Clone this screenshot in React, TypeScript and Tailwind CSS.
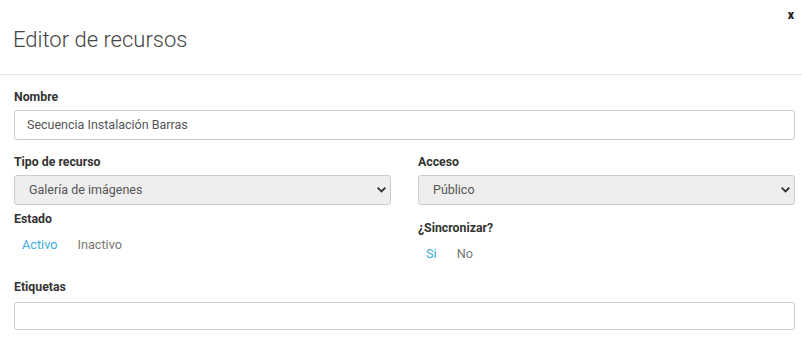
import React from "react";

function Chevron() {
  return (
    <svg width="9" height="6" viewBox="0 0 9 6" className="shrink-0">
      <path d="M1.3 1.3 L4.5 4.5 L7.7 1.3" fill="none" stroke="#333" strokeWidth="1.9" strokeLinecap="square" />
    </svg>
  );
}

function FakeSelect({ value }: { value: string }) {
  return (
    <div className="flex h-[30px] items-center justify-between rounded-[3px] border border-[#cccccc] bg-[#eeeeee] pl-[14px] pr-[4px] text-[12.5px] text-[#555555]">
      <span>{value}</span>
      <Chevron />
    </div>
  );
}

export default function App() {
  return (
    <div className="w-[802px] h-[359px] bg-white overflow-hidden" style={{ fontFamily: "Roboto, 'Liberation Sans', sans-serif" }}>
      <div className="relative h-[75px] border-b border-[#e5e5e5]">
        <h4 className="pl-[13px] pt-[27px] text-[22px] leading-[26px] font-light text-[#444444]">Editor de recursos</h4>
        <span className="absolute right-[8px] top-[8px] text-[12px] font-black text-[#222222] leading-[14px]">x</span>
      </div>
      <div className="pl-[14px] pr-[7px]">
        <div className="pt-[14px]">
          <label className="block text-[12.3px] leading-[16px] font-bold text-[#333333]">Nombre</label>
          <div className="mt-[5px] flex h-[30px] items-center rounded-[3px] border border-[#cccccc] bg-white px-[12px] text-[12.5px] text-[#555555]">
            Secuencia Instalación Barras
          </div>
        </div>
        <div className="mt-[14px] grid grid-cols-2 gap-x-[27px]">
          <div>
            <label className="block text-[12.3px] leading-[16px] font-bold text-[#333333]">Tipo de recurso</label>
            <div className="mt-[5px]"><FakeSelect value="Galería de imágenes" /></div>
            <label className="mt-[6px] block text-[12.3px] leading-[16px] font-bold text-[#333333]">Estado</label>
            <div className="mt-[8px] flex gap-[4px] text-[12.7px] leading-[20px]">
              <span className="px-[8px] text-[#3aaee0]">Activo</span>
              <span className="px-[8px] text-[#777777]">Inactivo</span>
            </div>
          </div>
          <div>
            <label className="block text-[12.3px] leading-[16px] font-bold text-[#333333]">Acceso</label>
            <div className="mt-[5px]"><FakeSelect value="Público" /></div>
            <label className="mt-[15px] block text-[12.3px] leading-[16px] font-bold text-[#333333]">¿Sincronizar?</label>
            <div className="mt-[8px] flex gap-[4px] text-[12.7px] leading-[20px]">
              <span className="px-[8px] text-[#3aaee0]">Si</span>
              <span className="px-[8px] text-[#777777]">No</span>
            </div>
          </div>
        </div>
        <div className="mt-[15px]">
          <label className="block text-[12.3px] leading-[16px] font-bold text-[#333333]">Etiquetas</label>
          <div className="mt-[7px] h-[28px] rounded-[3px] border border-[#cccccc] bg-white" />
        </div>
      </div>
    </div>
  );
}
